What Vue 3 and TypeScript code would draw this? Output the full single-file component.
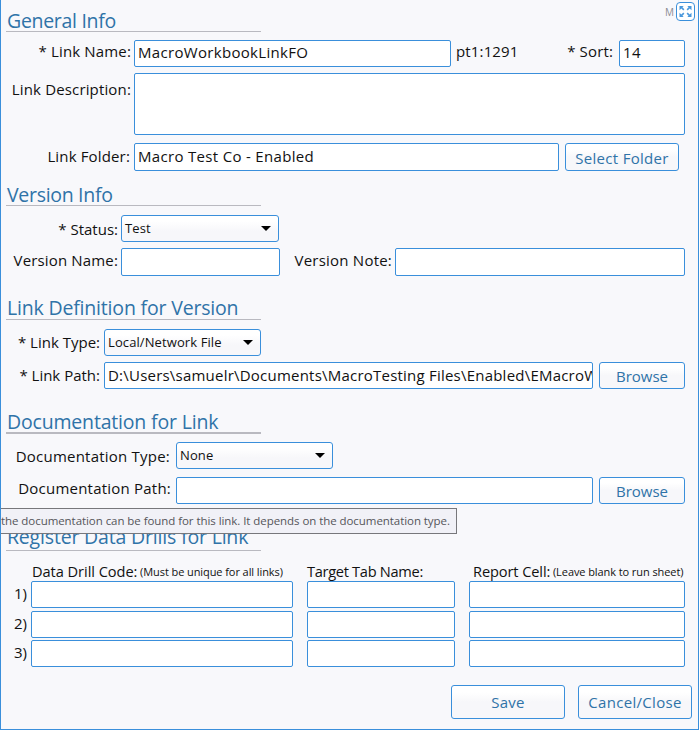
<script setup lang="ts">
import { ref } from 'vue'

const linkName = ref('MacroWorkbookLinkFO')
const sort = ref('14')
const description = ref('')
const folder = ref('Macro Test Co - Enabled')
const versionName = ref('')
const versionNote = ref('')
const linkPath = ref('D:\\Users\\samuelr\\Documents\\MacroTesting Files\\Enabled\\EMacroW')
const docPath = ref('')

interface Drill { code: string; tab: string; cell: string }
const drills = ref<Drill[]>([
  { code: '', tab: '', cell: '' },
  { code: '', tab: '', cell: '' },
  { code: '', tab: '', cell: '' },
])
</script>

<template>
  <main class="panel">
    <div class="corner">
      <span class="mode">M</span>
      <button class="expand" aria-label="Expand">
        <svg width="13" height="13" viewBox="0 0 13 13">
          <g fill="#4a98dc">
            <path d="M.5 1h4.2L3.4 2.3l2 2-1.1 1.1-2-2L.5 5.200z" />
            <path d="M12.500 1H8.300l1.300 1.300-2 2 1.100 1.100 2-2 1.800 1.800z" />
            <path d="M.5 12h4.200l-1.300-1.300 2-2-1.100-1.100-2 2L.5 7.800z" />
            <path d="M12.500 12H8.300l1.300-1.300-2-2 1.100-1.100 2 2 1.800-1.800z" />
          </g>
        </svg>
      </button>
    </div>

    <section class="general">
      <h2 class="tight">General Info</h2>
      <div class="row name-row">
        <label>* Link Name:</label>
        <input v-model="linkName" class="grow" />
        <span class="point">pt1:1291</span>
        <label class="sort-label">* Sort:</label>
        <input v-model="sort" class="sort" />
      </div>
      <div class="row desc-row">
        <label>Link Description:</label>
        <textarea v-model="description" class="grow"></textarea>
      </div>
      <div class="row folder-row">
        <label>Link Folder:</label>
        <input v-model="folder" class="grow" />
        <button class="btn select-folder">Select Folder</button>
      </div>
    </section>

    <section class="version">
      <h2 class="tight">Version Info</h2>
      <div class="row status-row">
        <label>* Status:</label>
        <div class="select"><span>Test</span><i class="arrow"></i></div>
      </div>
      <div class="row version-row">
        <label>Version Name:</label>
        <input v-model="versionName" class="version-name" />
        <label class="note-label">Version Note:</label>
        <input v-model="versionNote" class="grow" />
      </div>
    </section>

    <section class="definition">
      <h2>Link Definition for Version</h2>
      <div class="row type-row">
        <label>* Link Type:</label>
        <div class="select"><span>Local/Network File</span><i class="arrow"></i></div>
      </div>
      <div class="row path-row">
        <label>* Link Path:</label>
        <input v-model="linkPath" class="grow path" />
        <button class="btn browse">Browse</button>
      </div>
    </section>

    <section class="documentation">
      <h2 class="thick">Documentation for Link</h2>
      <div class="row doc-type-row">
        <label>Documentation Type:</label>
        <div class="select"><span>None</span><i class="arrow"></i></div>
      </div>
      <div class="row doc-path-row">
        <label>Documentation Path:</label>
        <input v-model="docPath" class="grow" />
        <button class="btn browse">Browse</button>
      </div>
      <div class="tooltip">the documentation can be found for this link. It depends on the documentation type.</div>
    </section>

    <section class="register">
      <h2>Register Data Drills for Link</h2>
      <div class="drills heads">
        <span></span>
        <div class="head">Data Drill Code: <small>(Must be unique for all links)</small></div>
        <div class="head">Target Tab Name:</div>
        <div class="head third">Report Cell: <small>(Leave blank to run sheet)</small></div>
      </div>
      <div v-for="(drill, i) in drills" :key="i" class="drills line">
        <span class="num">{{ i + 1 }})</span>
        <input v-model="drill.code" />
        <input v-model="drill.tab" />
        <input v-model="drill.cell" />
      </div>
    </section>

    <footer class="actions">
      <button class="btn">Save</button>
      <button class="btn">Cancel/Close</button>
    </footer>
  </main>
</template>

<style>
body {
  margin: 0;
  background: #f8f8fb;
}
</style>

<style scoped>
* {
  box-sizing: border-box;
}
.panel {
  position: relative;
  display: flex;
  flex-direction: column;
  width: 699px;
  height: 730px;
  padding: 8px 13px 0 0;
  border: 1px solid #3a8fdb;
  border-top: 0;
  background: #f8f8fb;
  color: #111;
  font: 15px "Open Sans", "Noto Sans", sans-serif;
  overflow: hidden;
}
.corner {
  position: absolute;
  top: 2px;
  right: 3px;
  display: flex;
  gap: 2px;
}
.mode {
  color: #8b8b93;
  font-size: 10px;
  line-height: 21px;
}
.expand {
  display: grid;
  place-items: center;
  width: 19px;
  height: 19px;
  padding: 0;
  border: 1px solid #3a8fdb;
  border-radius: 4px;
  background: #fff;
}
h2 {
  width: 255px;
  height: 24px;
  margin: 0 0 0 5px;
  padding-left: 1px;
  border-bottom: 1px solid #b9b9c0;
  color: #2f73a8;
  font-size: 19.5px;
  font-weight: 400;
  line-height: 25px;
  letter-spacing: -0.18px;
  white-space: nowrap;
}
h2.tight {
  letter-spacing: -0.3px;
}
h2.thick {
  height: 25px;
  border-bottom-width: 2px;
}
.definition h2 {
  line-height: 23px;
}
.register h2 {
  line-height: 20px;
}
.row {
  display: flex;
  height: 27px;
}
label,
.point {
  line-height: 22px;
  letter-spacing: 0.15px;
  white-space: nowrap;
}
label {
  flex: none;
  padding-right: 3px;
  text-align: right;
}
.general label {
  width: 133px;
}
.version label {
  width: 120px;
}
.definition label {
  width: 103px;
  padding-right: 4px;
  letter-spacing: 0;
}
.documentation label {
  width: 175px;
  padding-right: 5px;
  letter-spacing: 0.22px;
}
.documentation .doc-type-row label {
  padding-right: 6px;
}
input,
textarea {
  min-width: 0;
  margin: 0;
  padding: 0 0 3px 3px;
  border: 1px solid #3a8fdb;
  border-radius: 2px;
  outline: 0;
  background: #fff;
  color: #111;
  font: inherit;
  letter-spacing: 0.32px;
  resize: none;
}
.grow {
  flex: 1;
}
.path {
  padding-bottom: 1px;
  letter-spacing: 0.22px;
}
.btn {
  padding: 0;
  border: 1px solid #3a8fdb;
  border-radius: 3px;
  background: linear-gradient(#fff, #fff 20%, #f7f7fa 50%);
  color: #2f73a8;
  font: inherit;
  letter-spacing: 0.3px;
  white-space: nowrap;
}
.select {
  display: flex;
  align-items: center;
  justify-content: space-between;
  width: 157px;
  height: 27px;
  padding: 0 7px 1px 3px;
  border: 1px solid #3a8fdb;
  border-radius: 3px;
  background: linear-gradient(#fff, #fff 20%, #f7f7fa 60%);
  font-size: 13px;
  letter-spacing: 0.1px;
}
.arrow {
  border: 5px solid transparent;
  border-top-color: #000;
  border-bottom: 0;
}
.name-row {
  margin-top: 8px;
}
.general .sort-label {
  width: 101px;
  padding-right: 6px;
}
.point {
  width: 67px;
  padding-left: 5px;
}
.sort {
  width: 66px;
}
.desc-row {
  height: 62px;
  margin-top: 6px;
}
.desc-row label {
  line-height: 32px;
}
.folder-row {
  height: 28px;
  margin-top: 8px;
}
.general .folder-row label {
  padding-right: 4px;
  line-height: 26px;
}
.select-folder {
  width: 114px;
  margin: 0 6px;
  padding-top: 2px;
}
.version {
  margin-top: 11px;
}
.status-row {
  margin-top: 9px;
}
.version .status-row label {
  line-height: 28px;
  letter-spacing: 0;
}
.status-row .select {
  width: 158px;
}
.version-row {
  height: 28px;
  margin-top: 6px;
}
.version-row label {
  line-height: 25px;
}
.version-name {
  width: 159px;
}
.version .note-label {
  width: 115px;
  letter-spacing: 0.22px;
}
.definition {
  margin-top: 20px;
}
.type-row {
  margin-top: 9px;
}
.type-row label {
  line-height: 26px;
}
.path-row {
  margin-top: 6px;
}
.path-row label {
  line-height: 26px;
}
.browse {
  width: 86px;
  margin-left: 6px;
  letter-spacing: 0;
}
.documentation {
  position: relative;
  margin-top: 20px;
}
.doc-type-row {
  margin-top: 8px;
}
.doc-type-row label {
  line-height: 28px;
}
.doc-path-row {
  margin-top: 8px;
}
.doc-path-row label {
  line-height: 23px;
}
.tooltip {
  position: absolute;
  top: 99px;
  left: -1px;
  z-index: 1;
  width: 457px;
  height: 26px;
  padding-left: 1px;
  border: 1px solid #77777b;
  border-left: 0;
  background: #f1f1f7;
  color: #55555a;
  font-size: 11.5px;
  line-height: 24px;
  letter-spacing: -0.06px;
  white-space: nowrap;
}
.register {
  margin-top: 23px;
}
.drills {
  display: grid;
  grid-template-columns: 16px 262px 148px 216px;
  column-gap: 14px;
}
.heads {
  height: 22px;
  margin-top: 8px;
}
.head {
  padding-left: 1px;
  font-size: 14.6px;
  line-height: 24px;
  letter-spacing: -0.05px;
  white-space: nowrap;
}
.head:nth-child(3) {
  padding-left: 0;
  letter-spacing: -0.3px;
}
.head.third {
  padding-left: 4px;
  letter-spacing: -0.1px;
}
small {
  position: relative;
  top: -1px;
  margin-left: -1px;
  font-size: 11px;
  letter-spacing: -0.08px;
}
.line {
  height: 27px;
  margin-bottom: 2.5px;
}
.num {
  margin-right: -14px;
  padding-right: 18px;
  line-height: 24px;
  text-align: right;
}
.line .num {
  padding-right: 4px;
}
.actions {
  display: flex;
  justify-content: flex-end;
  gap: 13px;
  margin: 15px -7px 0 0;
}
.actions .btn {
  width: 114px;
  height: 34px;
}
</style>
